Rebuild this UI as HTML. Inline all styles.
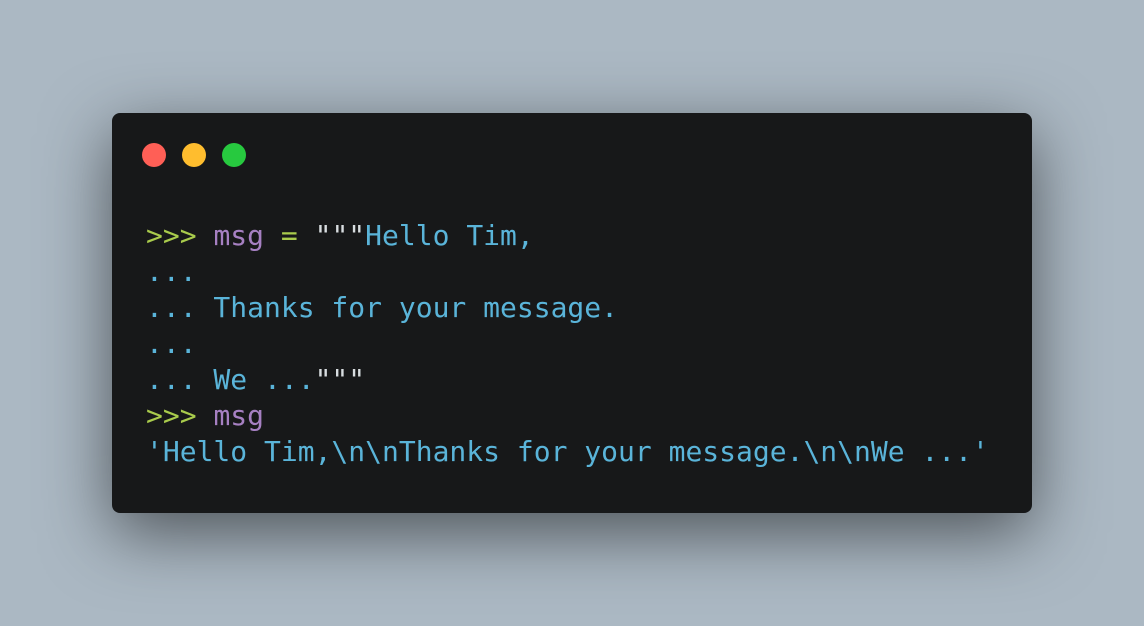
<!DOCTYPE html>
<html><head><style>
html,body{margin:0;padding:0;width:1144px;height:626px;background:#abb8c3;overflow:hidden}
.win{position:absolute;left:112px;top:113px;width:920px;height:400px;background:#171819;border-radius:8px;box-shadow:0 20px 68px rgba(0,0,0,0.55)}
.dot{position:absolute;top:30px;width:24px;height:24px;border-radius:50%}
pre{position:absolute;left:34px;top:105px;margin:0;font-family:"DejaVu Sans Mono","Liberation Mono",monospace;font-size:28px;line-height:36px;color:#5ab4d9}
.p{color:#a9cb4c}.v{color:#a680c2}.o{color:#a9cb4c}.q{color:#d8dde0}
</style></head><body>
<div class="win">
<div class="dot" style="left:30px;background:#ff5f56"></div>
<div class="dot" style="left:70px;background:#ffbd2e"></div>
<div class="dot" style="left:110px;background:#27c93f"></div>
<pre><span class="p">&gt;&gt;&gt;</span> <span class="v">msg</span> <span class="o">=</span> <span class="q">"""</span>Hello Tim,
...
... Thanks for your message.
...
... We ...<span class="q">"""</span>
<span class="p">&gt;&gt;&gt;</span> <span class="v">msg</span>
'Hello Tim,\n\nThanks for your message.\n\nWe ...'</pre>
</div>
</body></html>
